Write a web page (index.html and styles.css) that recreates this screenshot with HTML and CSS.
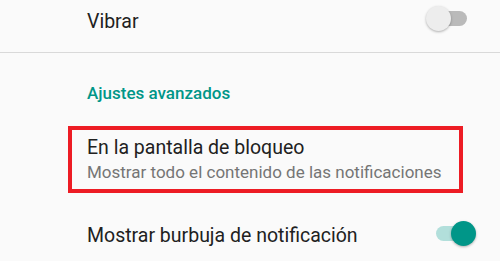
FILE: index.html
```html
<!DOCTYPE html>
<html lang="es">
<head>
<meta charset="utf-8">
<link rel="stylesheet" href="styles.css">
</head>
<body>
<div class="screen">
  <div class="row row-top">
    <span class="title">Vibrar</span>
    <span class="switch off"><span class="track"></span><span class="thumb"></span></span>
  </div>
  <div class="divider"></div>
  <div class="header">Ajustes avanzados</div>
  <div class="highlight">
    <div class="title">En la pantalla de bloqueo</div>
    <div class="summary">Mostrar todo el contenido de las notificaciones</div>
  </div>
  <div class="row row-bottom">
    <span class="title">Mostrar burbuja de notificación</span>
    <span class="switch on"><span class="track"></span><span class="thumb"></span></span>
  </div>
</div>
</body>
</html>
```
FILE: styles.css
```css
html, body {
  margin: 0;
  padding: 0;
  background: #fafafa;
}
body {
  width: 500px;
  height: 261px;
  overflow: hidden;
  font-family: Roboto, "Noto Sans", sans-serif;
}
.screen {
  display: flex;
  flex-direction: column;
}
.row {
  display: flex;
  align-items: center;
  justify-content: space-between;
  padding-left: 87px;
  padding-right: 24px;
}
.row-top {
  padding-top: 5.5px;
  margin-bottom: 15.5px;
}
.title {
  font-size: 19.5px;
  color: #212121;
  line-height: 23px;
  white-space: nowrap;
}
.divider {
  height: 1px;
  background: #d9d9d9;
}
.header {
  margin-top: 30px;
  padding-left: 87px;
  font-size: 17px;
  font-weight: 500;
  color: #009688;
  line-height: 21px;
}
.highlight {
  box-sizing: border-box;
  margin-top: 22px;
  margin-left: 68px;
  width: 395px;
  border: 4px solid #ed1c24;
  padding: 6px 0 7px 15px;
  display: flex;
  flex-direction: column;
  gap: 3px;
}
.summary {
  font-size: 17px;
  color: #757575;
  line-height: 20px;
  white-space: nowrap;
}
.row-bottom {
  margin-top: 27px;
}
.switch {
  position: relative;
  width: 50px;
  height: 26px;
  margin-bottom: 5px;
  display: flex;
  align-items: center;
  justify-content: center;
}
.track {
  width: 31px;
  height: 15px;
  border-radius: 8px;
}
.thumb {
  position: absolute;
  top: 0.5px;
  width: 25px;
  height: 25px;
  border-radius: 50%;
  box-shadow: 0 1px 2.5px rgba(0, 0, 0, 0.3);
}
.off .track { background: #bababa; }
.off .thumb { left: 0; background: #ededed; }
.on .track { background: #b2dfdb; }
.on .thumb { right: 0; background: #009688; }
```
